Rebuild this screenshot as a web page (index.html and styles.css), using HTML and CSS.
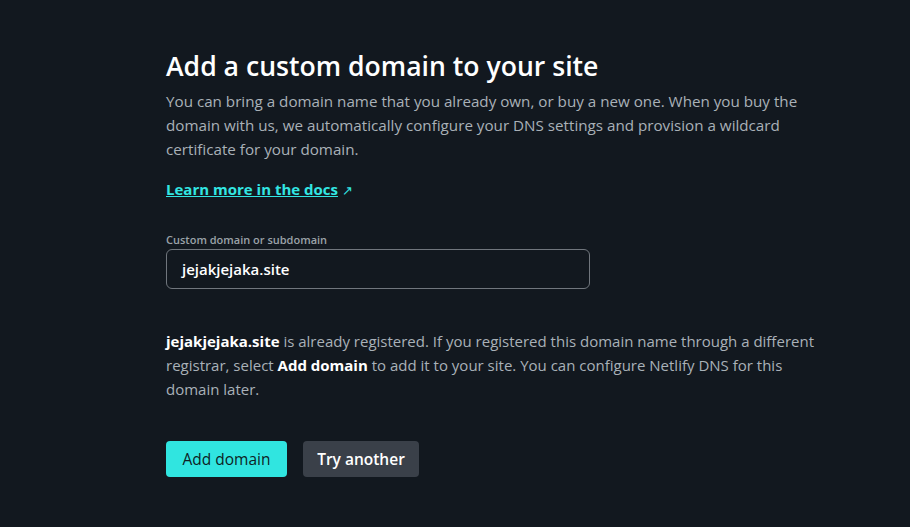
FILE: index.html
```html
<!DOCTYPE html>
<html>
<head>
<meta charset="utf-8">
<link rel="stylesheet" href="styles.css">
</head>
<body>
<main class="page">
  <section class="card">
    <h1 class="title">Add a custom domain to your site</h1>
    <p class="lead">You can bring a domain name that you already own, or buy a new one. When you buy the domain with us, we automatically configure your DNS settings and provision a wildcard certificate for your domain.</p>
    <p class="docs"><a class="docs-link" href="#">Learn more in the docs</a> <span class="arrow">&#8599;</span></p>
    <label class="field">
      <span class="field-label">Custom domain or subdomain</span>
      <span class="input">jejakjejaka.site</span>
    </label>
    <p class="note"><strong>jejakjejaka.site</strong> is already registered. If you registered this domain name through a different registrar, select <strong>Add domain</strong> to add it to your site. You can configure Netlify DNS for this domain later.</p>
    <div class="actions">
      <button class="btn btn-primary">Add domain</button>
      <button class="btn btn-secondary">Try another</button>
    </div>
  </section>
</main>
</body>
</html>
```
FILE: styles.css
```css
html, body {
  margin: 0;
  padding: 0;
  background: #12181f;
  height: 100%;
}
body {
  font-family: "Open Sans", "Noto Sans", sans-serif;
  color: #a9b0b5;
}
.page {
  padding: 48px 0 0 166px;
}
.card {
  width: 650px;
}
.title {
  margin: 0;
  font-size: 26.6px;
  line-height: 36px;
  font-weight: 600;
  color: #ffffff;
}
.lead {
  margin: 5px 0 0;
  font-size: 15.2px;
  line-height: 24px;
  color: #a9b1b8;
}
.docs {
  margin: 16px 0 0;
  font-size: 15px;
  line-height: 24px;
}
.docs-link {
  color: #32e6e2;
  font-weight: 700;
  text-decoration: underline;
}
.arrow {
  color: #32e6e2;
  font-size: 13px;
}
.field {
  display: flex;
  flex-direction: column;
  margin-top: 30px;
  width: 424px;
}
.field-label {
  font-size: 11px;
  font-weight: 600;
  color: #9ba2a8;
  line-height: 16px;
  margin-bottom: 1px;
}
.input {
  border: 1px solid #70767d;
  border-radius: 6px;
  box-sizing: border-box;
  height: 40px;
  padding: 0 15px;
  display: flex;
  align-items: center;
  color: #ffffff;
  font-weight: 600;
  font-size: 15px;
}
.note {
  margin: 40px 0 0;
  font-size: 15px;
  line-height: 24px;
  color: #a9b1b8;
}
.note strong {
  color: #ffffff;
  font-weight: 700;
}
.actions {
  display: flex;
  gap: 16px;
  margin-top: 40px;
}
.btn {
  border: 0;
  border-radius: 4px;
  height: 36px;
  font-family: inherit;
  font-size: 15.5px;
}
.btn-primary {
  background: #30e5e0;
  color: #0e1e25;
  width: 121px;
  padding: 0;
}
.btn-secondary {
  background: #3a4049;
  color: #ffffff;
  font-weight: 600;
  width: 116px;
  padding: 0;
}
```
